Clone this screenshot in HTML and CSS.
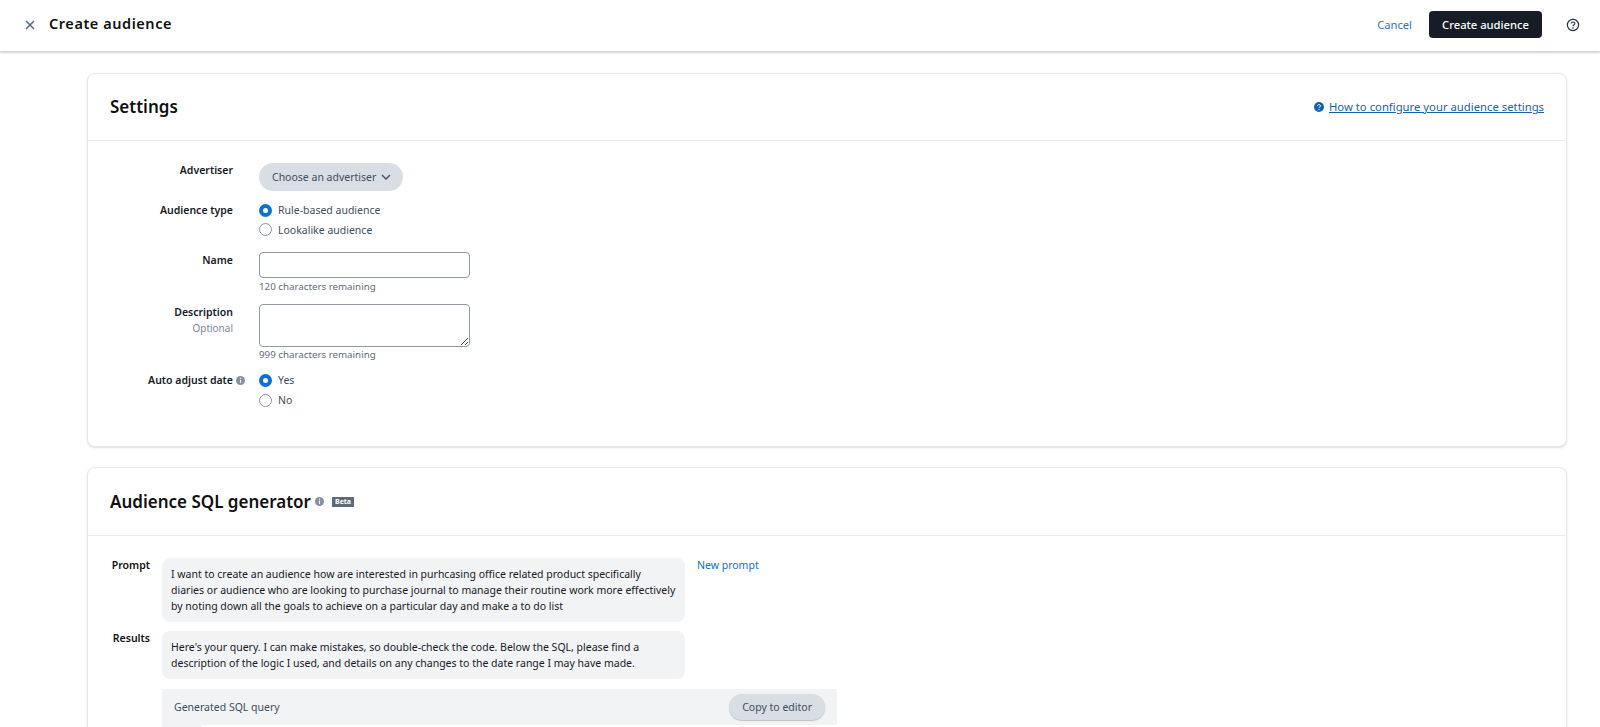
FILE: index.html
```html
<!DOCTYPE html>
<html lang="en">
<head>
<meta charset="utf-8">
<title>Create audience</title>
<link rel="stylesheet" href="styles.css">
</head>
<body>
<header class="topbar">
  <div class="topbar-left">
    <svg class="close-icon" width="12" height="12" viewBox="0 0 12 12"><path d="M2 2l8 8M10 2l-8 8" stroke="#5f6b7a" stroke-width="1.6" fill="none"/></svg>
    <h1 class="page-title">Create audience</h1>
  </div>
  <div class="topbar-right">
    <a class="cancel">Cancel</a>
    <button class="primary">Create audience</button>
    <svg class="help-icon" width="14" height="14" viewBox="0 0 14 14"><circle cx="7" cy="7" r="5.6" fill="none" stroke="#232f3e" stroke-width="1.2"/><path d="M5.2 5.6a1.8 1.6 0 1 1 2.7 1.4c-.6.4-.9.6-.9 1.3" fill="none" stroke="#232f3e" stroke-width="1.2"/><circle cx="7" cy="10" r=".8" fill="#232f3e"/></svg>
  </div>
</header>
<main class="content">
  <section class="card card-settings">
    <div class="card-head">
      <h2 class="card-title">Settings</h2>
      <a class="help-link">
        <svg width="10" height="10" viewBox="0 0 10 10"><circle cx="5" cy="5" r="5" fill="#0f62b5"/><path d="M3.5 3.9a1.5 1.3 0 1 1 2.3 1.1c-.5.3-.8.5-.8 1" fill="none" stroke="#fff" stroke-width="1"/><circle cx="5" cy="7.6" r=".65" fill="#fff"/></svg>
        <span>How to configure your audience settings</span>
      </a>
    </div>
    <div class="form">
      <div class="row row-advertiser">
        <div class="label">Advertiser</div>
        <button class="pill">Choose an advertiser
          <svg width="10" height="6" viewBox="0 0 10 6"><path d="M1 1l4 4 4-4" fill="none" stroke="#4b5766" stroke-width="1.5"/></svg>
        </button>
      </div>
      <div class="row row-type">
        <div class="label">Audience type</div>
        <div class="radios">
          <div class="radio-line"><span class="radio on"></span>Rule-based audience</div>
          <div class="radio-line"><span class="radio"></span>Lookalike audience</div>
        </div>
      </div>
      <div class="row row-name">
        <div class="label">Name</div>
        <div class="field">
          <div class="input"></div>
          <div class="hint">120 characters remaining</div>
        </div>
      </div>
      <div class="row row-desc">
        <div class="label">Description<div class="optional">Optional</div></div>
        <div class="field">
          <div class="input textarea">
            <svg class="grip" width="9" height="9" viewBox="0 0 9 9"><path d="M1 8l7-7M5 8l3-3" stroke="#3c4650" stroke-width="1" fill="none"/></svg>
          </div>
          <div class="hint">999 characters remaining</div>
        </div>
      </div>
      <div class="row row-auto">
        <div class="label label-info">Auto adjust date
          <svg class="info" width="9" height="9" viewBox="0 0 9 9"><circle cx="4.5" cy="4.5" r="4.5" fill="#8591a1"/><path d="M4.5 3.8v3M4.5 1.7v1.1" stroke="#fff" stroke-width="1.1"/></svg>
        </div>
        <div class="radios">
          <div class="radio-line"><span class="radio on"></span>Yes</div>
          <div class="radio-line"><span class="radio"></span>No</div>
        </div>
      </div>
    </div>
  </section>
  <section class="card card-sql">
    <div class="card-head">
      <h2 class="card-title">Audience SQL generator</h2>
      <svg class="info-title" width="9" height="9" viewBox="0 0 9 9"><circle cx="4.5" cy="4.5" r="4.5" fill="#8591a1"/><path d="M4.5 3.8v3M4.5 1.7v1.1" stroke="#fff" stroke-width="1.1"/></svg>
      <span class="beta">Beta</span>
    </div>
    <div class="chat">
      <div class="chat-row">
        <div class="chat-label">Prompt</div>
        <div class="bubble">I want to create an audience how are interested in purhcasing office related product specifically diaries or audience who are looking to purchase journal to manage their routine work more effectively by noting down all the goals to achieve on a particular day and make a to do list</div>
        <a class="new-prompt">New prompt</a>
      </div>
      <div class="chat-row chat-row-results">
        <div class="chat-label">Results</div>
        <div class="bubble">Here's your query. I can make mistakes, so double-check the code. Below the SQL, please find a description of the logic I used, and details on any changes to the date range I may have made.</div>
      </div>
      <div class="sql-box">
        <div class="sql-head">
          <span>Generated SQL query</span>
          <button class="pill pill-copy">Copy to editor</button>
        </div>
        <div class="sql-body"></div>
      </div>
    </div>
  </section>
</main>
</body>
</html>
```
FILE: styles.css
```css
* { box-sizing: border-box; }
html, body { height: 100%; }
body {
  margin: 0;
  height: 727px;
  overflow: hidden;
  background: #fff;
  color: #16191f;
  font-family: "Noto Sans", "Open Sans", sans-serif;
  font-size: 10.5px;
  line-height: 16px;
}
.topbar {
  height: 52px;
  display: flex;
  align-items: center;
  justify-content: space-between;
  padding: 0 17px 2px 24px;
  border-bottom: 1px solid #d5d5d2;
  box-shadow: 0 1px 2px rgba(0, 0, 0, .18);
  background: #fff;
}
.topbar-left { display: flex; align-items: center; gap: 13px; }
.close-icon { display: block; }
.page-title {
  margin: 0 0 3px;
  font-size: 14.5px;
  font-weight: 600;
  letter-spacing: .55px;
  line-height: 20px;
  color: #0f1111;
}
.topbar-right { display: flex; align-items: center; }
.cancel { color: #2f6fc9; font-size: 11.2px; margin-right: 17px; }
.primary {
  width: 113px;
  height: 27px;
  margin-right: 24px;
  border: 0;
  border-radius: 4px;
  background: #161d26;
  color: #fff;
  font: 500 11.2px "Noto Sans", sans-serif;
}
.help-icon { display: block; margin-right: 3px; }
.content { padding: 21px 33px 0 87px; }
.card {
  background: #fff;
  border: 1px solid #e6e8ec;
  border-radius: 8px;
  box-shadow: 0 1px 2px rgba(35, 47, 62, .16);
}
.card-settings { height: 374px; margin-bottom: 20px; }
.card-sql { height: 300px; }
.card-head {
  height: 68px;
  display: flex;
  align-items: center;
  padding: 0 22px;
  border-bottom: 1px solid #e9ebed;
}
.card-settings .card-head { height: 67px; }
.card-title {
  margin: 0;
  font-size: 17px;
  font-weight: 600;
  line-height: 22px;
  color: #0f1111;
}
.help-link {
  margin-left: auto;
  display: flex;
  align-items: center;
  gap: 5px;
  color: #1a5fb4;
  font-size: 11.3px;
}
.help-link span { text-decoration: underline; }
.form { padding-top: 22px; }
.row { display: flex; }
.label {
  width: 145px;
  margin-right: 26px;
  text-align: right;
  font-weight: 600;
  color: #16191f;
  position: relative;
}
.row-advertiser .label { margin-top: -1px; }
.optional { font-weight: 400; font-size: 10px; color: #7d8998; }
.row-advertiser { height: 39px; }
.pill {
  display: inline-flex;
  align-items: center;
  gap: 5px;
  height: 28px;
  padding: 0 12px 0 13px;
  border: 0;
  border-radius: 14px;
  background: #d9dee5;
  color: #414d5c;
  font: 400 10.5px "Noto Sans", sans-serif;
}
.row-type { height: 50px; }
.radios { display: flex; flex-direction: column; gap: 4px; }
.row-type .radios { gap: 3.5px; }
.radio-line { display: flex; align-items: center; gap: 6px; height: 16px; color: #414d5c; }
.radio {
  width: 13px;
  height: 13px;
  border-radius: 50%;
  border: 1px solid #8c97a6;
  background: #fff;
}
.radio.on { border: 4px solid #0972d3; }
.row-name { height: 52px; }
.input {
  width: 211px;
  height: 26px;
  border: 1px solid #8d99a8;
  border-radius: 4px;
  background: #fff;
}
.textarea { height: 43px; position: relative; }
.grip { position: absolute; right: 0; bottom: 0; }
.hint { margin-top: 0; font-size: 9.75px; line-height: 16px; color: #5f6b7a; }
.row-name .hint { margin-top: 1px; }
.row-desc { height: 68px; }
.row-auto { height: 49px; }
.info { position: absolute; right: -12px; top: 4px; }
.info-title { margin-left: 4px; display: block; }
.beta {
  margin-left: 8px;
  background: #5f6b7a;
  color: #fff;
  font-size: 7px;
  font-weight: 700;
  line-height: 10px;
  padding: 0 3px;
}
.chat { padding: 22px 0 0 22px; }
.chat-row { display: flex; margin-bottom: 9px; align-items: flex-start; }
.chat-row-results { margin-bottom: 10px; }
.chat-label {
  width: 40px;
  margin-top: -1px;
  margin-right: 12px;
  text-align: right;
  font-weight: 600;
  color: #0f1111;
}
.bubble {
  width: 523px;
  padding: 8px 9px;
  background: #f2f3f5;
  border-radius: 8px;
  color: #16191f;
}
.new-prompt { margin-left: 12px; margin-top: -1px; color: #0972d3; }
.sql-box { margin-left: 52px; width: 675px; background: #f2f3f5; }
.sql-head {
  height: 36px;
  display: flex;
  align-items: center;
  justify-content: space-between;
  padding: 0 12px 1px;
  color: #414d5c;
}
.pill-copy { height: 26px; padding: 0 13px; box-shadow: 0 1px 1px rgba(35,47,62,.25); }
.sql-body { height: 60px; margin-left: 40px; background: #fff; }
```
